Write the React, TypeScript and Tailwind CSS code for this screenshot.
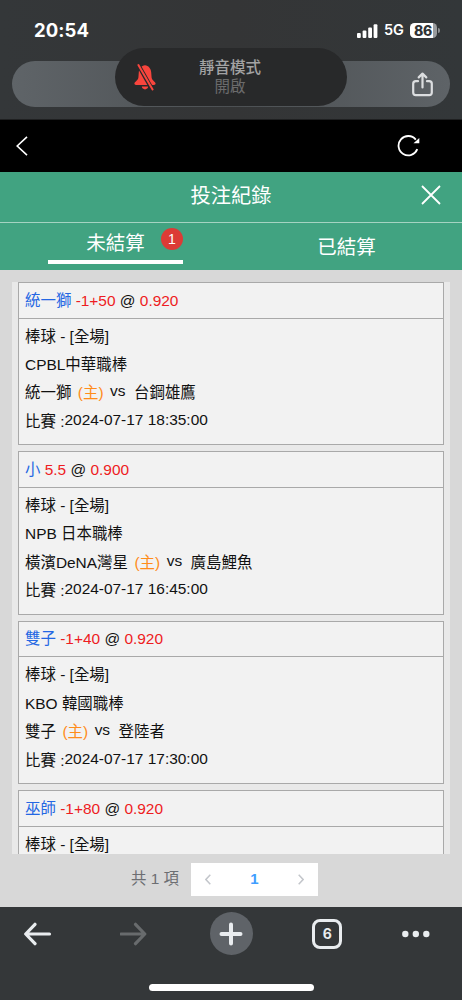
const bets = [
  {
    pick: "統一獅",
    line: "-1+50",
    odds: "0.920",
    league: "CPBL中華職棒",
    home: "統一獅",
    away: "台鋼雄鷹",
    time: "2024-07-17 18:35:00",
  },
  {
    pick: "小",
    line: "5.5",
    odds: "0.900",
    league: "NPB 日本職棒",
    home: "橫濱DeNA灣星",
    away: "廣島鯉魚",
    time: "2024-07-17 16:45:00",
  },
  {
    pick: "雙子",
    line: "-1+40",
    odds: "0.920",
    league: "KBO 韓國職棒",
    home: "雙子",
    away: "登陸者",
    time: "2024-07-17 17:30:00",
  },
  {
    pick: "巫師",
    line: "-1+80",
    odds: "0.920",
  },
];

function StatusBar() {
  return (
    <div className="flex h-[61px] items-center justify-between pl-[34px] pr-[22px] text-white">
      <span className="font-['Inter',sans-serif] text-[18.5px] font-bold leading-none tracking-[0.1px]">
        20:54
      </span>
      <div className="flex items-center">
        <svg width="21" height="14" viewBox="0 0 21 14" fill="white">
          <rect x="0" y="9" width="3.8" height="5" rx="1" />
          <rect x="5.6" y="6.6" width="3.8" height="7.4" rx="1" />
          <rect x="11.2" y="3.6" width="3.8" height="10.4" rx="1" />
          <rect x="16.6" y="0.3" width="3.8" height="13.7" rx="1" />
        </svg>
        <span className="ml-[6px] w-[20px] font-['Inter',sans-serif] text-[14.5px] font-semibold leading-none">
          5G
        </span>
        <div className="ml-[6px] flex h-[15px] w-[27px] items-center justify-center rounded-[4.5px] bg-linear-to-r from-white from-85% to-[#9a9c9e] to-85% pr-[1px] font-['Inter',sans-serif] text-[14px] font-extrabold leading-none tracking-[-0.2px] text-[#303335]">
          86
        </div>
        <div className="ml-px h-[5px] w-[2px] rounded-r-full bg-[#8c8e90]" />
      </div>
    </div>
  );
}

function BrowserHeader() {
  return (
    <header className="relative h-[120px] shrink-0 border-b border-[#1f2021] bg-linear-to-r from-[#343739] via-[#343536] to-[#333739]">
      <StatusBar />
      <div className="mx-3 flex h-[46px] items-center justify-end rounded-full bg-linear-to-r from-[#5f6468] via-[#4c5053] to-[#5e6367] pr-[17px]">
        <svg width="21" height="25" viewBox="0 0 21 25" fill="none" stroke="#dcdee0" strokeWidth="2.2" strokeLinecap="round" strokeLinejoin="round">
          <path d="M6 9.2H3.8C2.2 9.2 1.2 10.2 1.2 11.8V20.6C1.2 22.2 2.2 23.2 3.8 23.2H17.2C18.8 23.2 19.8 22.2 19.8 20.6V11.8C19.8 10.2 18.8 9.2 17.2 9.2H15" />
          <path d="M10.5 15.5V2M6.7 5.4 10.5 1.6 14.3 5.4" />
        </svg>
      </div>

      {/* silent mode banner */}
      <div className="absolute left-[115px] top-12 flex h-[58px] w-[232px] items-center rounded-full bg-[#28292a]">
        <svg className="ml-[18px]" width="24" height="28" viewBox="0 0 24 28">
          <path d="M12 2.2C8.5 2.6 6.2 5.3 5.8 9.2L5.4 14.4C5.1 17.4 1.4 18.6 1.4 20.6 1.4 21.5 2 21.9 3 21.9H21C22 21.9 22.6 21.5 22.6 20.6 22.6 18.6 18.9 17.4 18.6 14.4L18.2 9.2C17.8 5.3 15.5 2.6 12 2.2Z" fill="#f8453d" />
          <path d="M8.8 23.6H15.2C15 25.3 13.7 26.4 12 26.4 10.3 26.4 9 25.3 8.8 23.6Z" fill="#f8453d" />
          <path d="M5 1.5 19.5 27" stroke="#28292a" strokeWidth="4.2" />
          <path d="M5.4 2 19.6 26.4" stroke="#f8453d" strokeWidth="2" strokeLinecap="round" />
        </svg>
        <div className="ml-[33px] w-20 text-center text-[15.5px] leading-[19px]">
          <p className="font-medium text-[#a3a3a4]">靜音模式</p>
          <p className="text-[#6b6b6c]">開啟</p>
        </div>
      </div>
    </header>
  );
}

function Tabs() {
  return (
    <div className="flex h-12 text-[19.5px] leading-none">
      <div className="flex w-[231px] justify-center">
        <div className="relative flex h-[42px] w-[135px] justify-center border-b-[4px] border-white pt-[12px]">
          未結算
          <span className="absolute right-0 top-[6px] flex size-[22px] items-center justify-center rounded-full bg-[#dc3b36] font-['Liberation_Sans',sans-serif] text-[14px]">
            1
          </span>
        </div>
      </div>
      <div className="flex w-[231px] justify-center pt-[16px]">已結算</div>
    </div>
  );
}

function BetCard({ bet }) {
  return (
    <article className="h-[163.4px] shrink-0 border border-[#a9a9a9] bg-[#f2f2f2] text-[#111]">
      <div className="flex h-[35.5px] items-center gap-[4.3px] border-b border-[#a9a9a9] pl-[6px]">
        <span className="text-[#2467e3]">{bet.pick}</span>
        <span className="text-[#ee1c22]">{bet.line}</span>
        <span>@</span>
        <span className="text-[#ee1c22]">{bet.odds}</span>
      </div>
      <div className="pl-[6px] pt-[4px] leading-[28.4px]">
        <p>棒球 - [全場]</p>
        {bet.league && (
          <>
            <p>{bet.league}</p>
            <p className="flex">
              <span>{bet.home}</span>
              <span className="ml-[6.5px] text-[#ff8c1a]">(主)</span>
              <span className="relative -top-[2px] ml-[6.5px]">vs</span>
              <span className="ml-[8.5px]">{bet.away}</span>
            </p>
            <p className="flex">
              <span>比賽 :</span>
              <span className="relative -top-[2px]">{bet.time}</span>
            </p>
          </>
        )}
      </div>
    </article>
  );
}

function Pagination() {
  return (
    <div className="flex h-[53px] items-center pl-[131px] pb-[3px]">
      <span className="w-[60px] text-[15.4px] text-[#6c6e72]">共 1 項</span>
      <div className="flex h-[33px] w-[127px] items-center justify-between bg-white px-[14px]">
        <svg width="6" height="11" viewBox="0 0 6 11" fill="none" stroke="#c3c6cb" strokeWidth="1.5">
          <path d="M5.3.8.9 5.5 5.3 10.2" />
        </svg>
        <span className="text-[15px] font-bold text-[#409eff]">1</span>
        <svg width="6" height="11" viewBox="0 0 6 11" fill="none" stroke="#c3c6cb" strokeWidth="1.5">
          <path d="M.7.8 5.1 5.5.7 10.2" />
        </svg>
      </div>
    </div>
  );
}

function BrowserToolbar() {
  return (
    <footer className="flex h-[93px] shrink-0 flex-col items-center bg-[#343739]">
      <div className="flex h-[53px] w-full items-center justify-between pl-6 pr-8">
        <svg width="28" height="24" viewBox="0 0 28 24" fill="none" stroke="#e9ecef" strokeWidth="3.2" strokeLinecap="round" strokeLinejoin="round">
          <path d="M25.5 12H2M11 2.3 1.7 12 11 21.7" />
        </svg>
        <svg className="ml-[8px] mr-[2px]" width="28" height="24" viewBox="0 0 28 24" fill="none" stroke="#686b6d" strokeWidth="3.2" strokeLinecap="round" strokeLinejoin="round">
          <path d="M1 12H24.5M15.5 2.3 24.8 12 15.5 21.7" />
        </svg>
        <div className="flex size-[43px] items-center justify-center rounded-full bg-[#5f6368]">
          <svg width="24" height="24" viewBox="0 0 24 24" stroke="#e9ecef" strokeWidth="4" strokeLinecap="round">
            <path d="M12 2.5V21.5M2.5 12H21.5" />
          </svg>
        </div>
        <div className="flex size-[30px] items-center justify-center rounded-[8px] border-[3px] border-[#e9ecef] font-['Inter',sans-serif] text-[14px] font-bold leading-none text-[#e9ecef]">
          6
        </div>
        <svg width="28" height="8" viewBox="0 0 28 8" fill="#e9ecef">
          <circle cx="3.3" cy="4" r="3.2" />
          <circle cx="13.8" cy="4" r="3.2" />
          <circle cx="24.3" cy="4" r="3.2" />
        </svg>
      </div>
      <div className="mt-6 h-[7px] w-[165px] rounded-full bg-white" />
    </footer>
  );
}

export default function App() {
  return (
    <div className="flex h-[1000px] w-[462px] flex-col overflow-hidden bg-[#d8d8d8] font-['Liberation_Sans','Noto_Sans_CJK_TC',sans-serif]">
      <BrowserHeader />

      <nav className="flex h-[52px] shrink-0 items-center justify-between bg-black pl-4 pr-[42px]">
        <svg width="12" height="20" viewBox="0 0 12 20" fill="none" stroke="white" strokeWidth="1.6">
          <path d="M11 .8 1.2 10 11 19.2" />
        </svg>
        <svg width="23" height="22" viewBox="0 0 23 22" fill="none" stroke="white" strokeWidth="1.8">
          <path d="M20.3 14.2A9.7 9.7 0 1 1 18.8 4.6" />
          <path d="M16.5 8.2H22.3V3Z" fill="white" stroke="none" />
        </svg>
      </nav>

      <div className="shrink-0 bg-[#41a381] text-white">
        <div className="relative flex h-[51px] items-center justify-center border-b border-[#a5d3c2] pb-[1px] text-[20.3px] leading-none">
          投注紀錄
          <svg className="absolute right-[21px] top-[13px]" width="20" height="20" viewBox="0 0 20 20" stroke="white" strokeWidth="1.8">
            <path d="M1 1 19 19M19 1 1 19" />
          </svg>
        </div>
        <div className="-mt-px">
          <Tabs />
        </div>
      </div>

      <main className="min-h-0 flex-1 pt-3">
        <div className="mx-3 flex h-[572px] flex-col gap-[6px] overflow-hidden bg-[#e9e9e9] px-[6px] text-[15.45px] leading-none">
          {bets.map((bet) => (
            <BetCard key={bet.pick} bet={bet} />
          ))}
        </div>
        <Pagination />
      </main>

      <BrowserToolbar />
    </div>
  );
}
